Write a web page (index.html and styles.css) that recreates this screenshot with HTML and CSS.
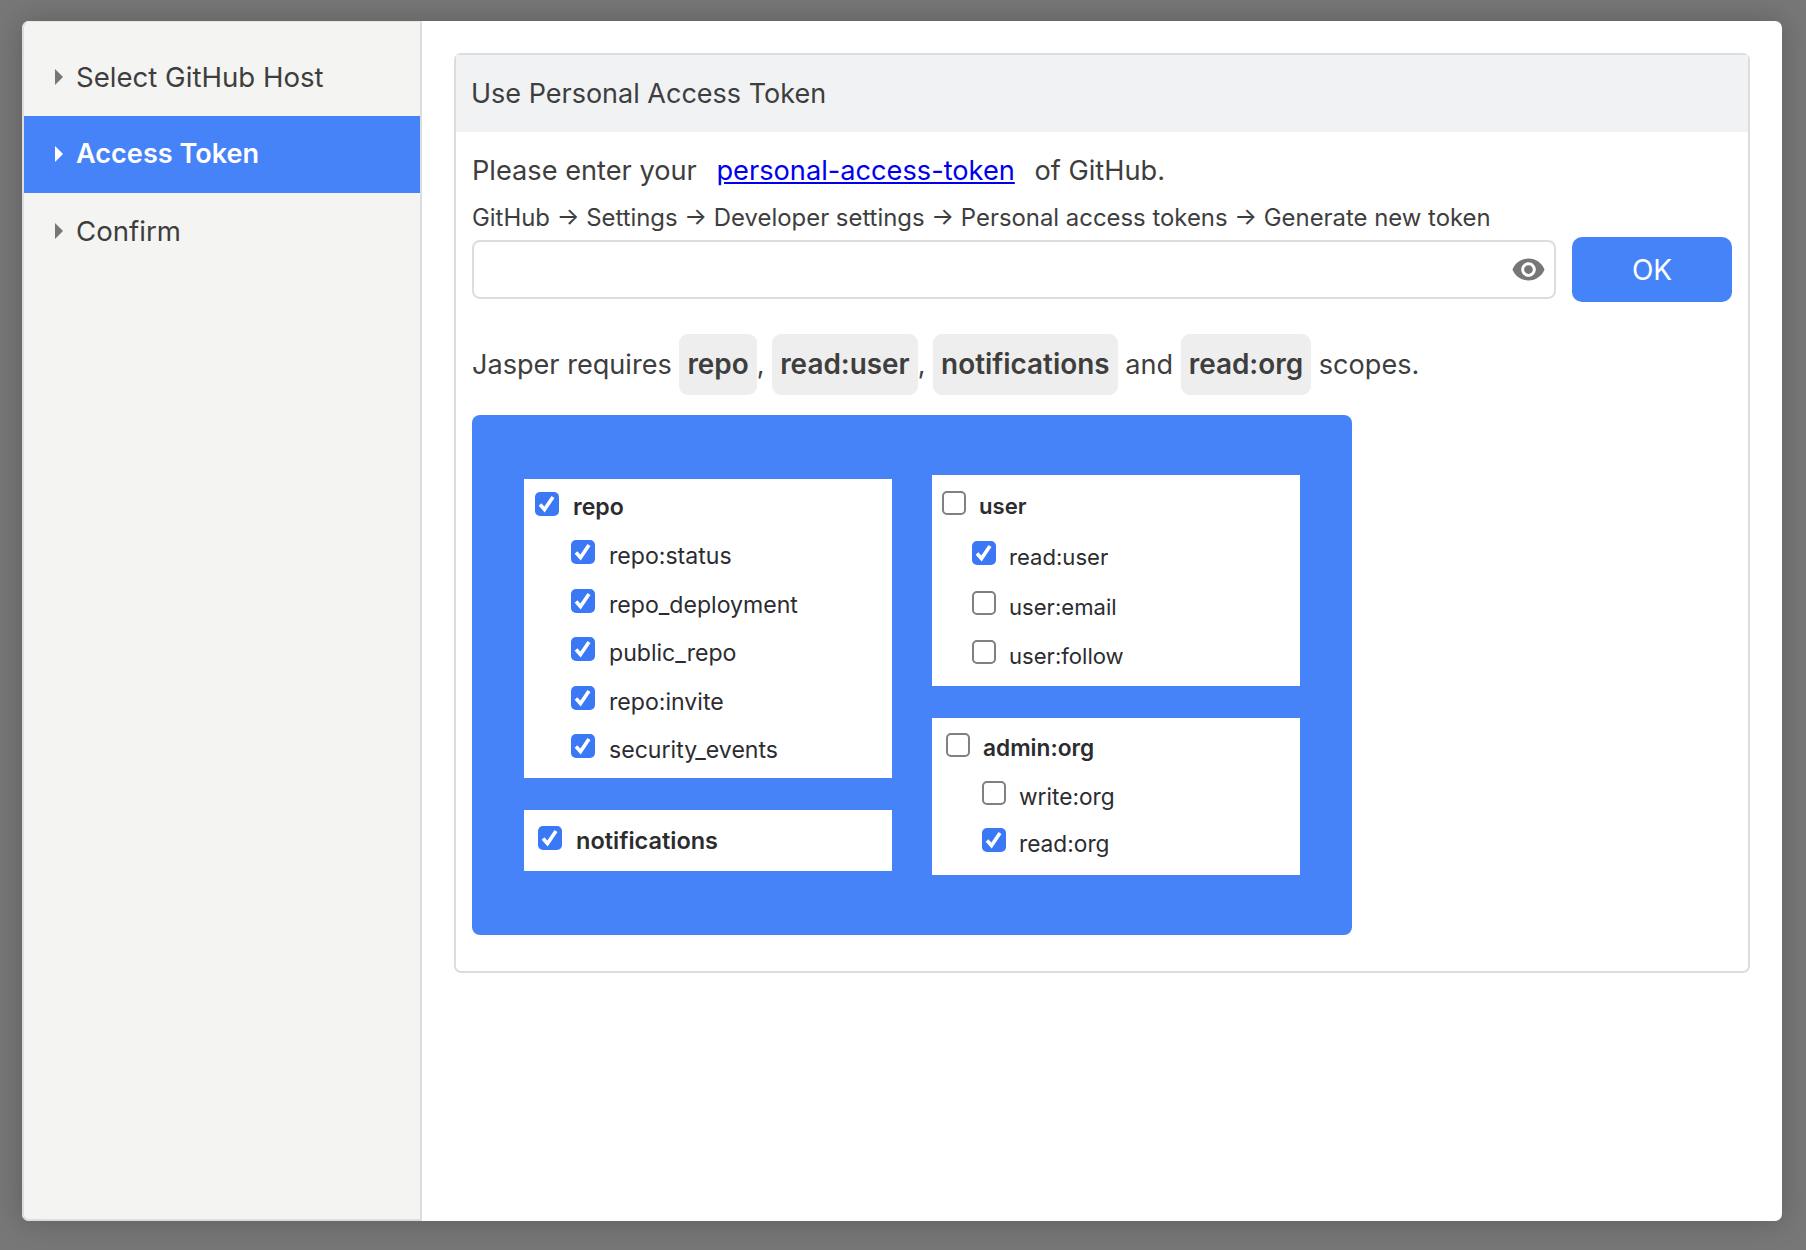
FILE: index.html
```html
<!DOCTYPE html>
<html lang="en">
<head>
    <meta charset="UTF-8">
    <title>Jasper</title>
    <link rel="stylesheet" href="styles.css">
</head>
<body>
    <div class="window">
        <div class="side">
            <div class="side-item"><span class="arrow"></span>Select GitHub Host</div>
            <div class="side-item active"><span class="arrow"></span>Access Token</div>
            <div class="side-item"><span class="arrow"></span>Confirm</div>
        </div>
        <div class="main">
            <div class="panel">
                <div class="panel-head">Use Personal Access Token</div>
                <div class="panel-body">
                    <div class="intro">Please enter your <a href="#">personal-access-token</a> of GitHub.</div>
                    <div class="path">GitHub → Settings → Developer settings → Personal access tokens → Generate new token</div>
                    <div class="token-row">
                        <div class="token-field">
                            <input type="password" class="token-input">
                            <svg class="eye" viewBox="0 0 24 24"><path d="M12 4.5C7 4.5 2.73 7.61 1 12c1.73 4.39 6 7.5 11 7.5s9.27-3.11 11-7.5c-1.73-4.39-6-7.5-11-7.5zM12 17c-2.76 0-5-2.24-5-5s2.24-5 5-5 5 2.24 5 5-2.24 5-5 5zm0-8c-1.66 0-3 1.34-3 3s1.34 3 3 3 3-1.34 3-3-1.34-3-3-3z"/></svg>
                        </div>
                        <button class="ok-btn">OK</button>
                    </div>
                    <div class="scopes">Jasper requires <span class="pill">repo</span>, <span class="pill">read:user</span>, <span class="pill">notifications</span> and <span class="pill">read:org</span> scopes.</div>
                    <div class="scope-shot">
                        <div class="scope-col left-col">
                            <div class="scope-box repo-box">
                                <label class="row top"><input type="checkbox" checked>repo</label>
                                <label class="row"><input type="checkbox" checked>repo:status</label>
                                <label class="row"><input type="checkbox" checked>repo_deployment</label>
                                <label class="row"><input type="checkbox" checked>public_repo</label>
                                <label class="row"><input type="checkbox" checked>repo:invite</label>
                                <label class="row"><input type="checkbox" checked>security_events</label>
                            </div>
                            <div class="scope-box notif-box">
                                <label class="row top"><input type="checkbox" checked>notifications</label>
                            </div>
                        </div>
                        <div class="scope-col">
                            <div class="scope-box user-box">
                                <label class="row top"><input type="checkbox">user</label>
                                <label class="row"><input type="checkbox" checked>read:user</label>
                                <label class="row"><input type="checkbox">user:email</label>
                                <label class="row"><input type="checkbox">user:follow</label>
                            </div>
                            <div class="scope-box org-box">
                                <label class="row top"><input type="checkbox">admin:org</label>
                                <label class="row"><input type="checkbox">write:org</label>
                                <label class="row"><input type="checkbox" checked>read:org</label>
                            </div>
                        </div>
                    </div>
                </div>
            </div>
        </div>
    </div>
</body>
</html>
```
FILE: styles.css
```css
* {
    box-sizing: border-box;
}

body {
    margin: 0;
    height: 1250px;
    padding: 21px 24px 29px 22px;
    overflow: hidden;
    background-color: #777;
    font-family: Inter, "Liberation Sans", sans-serif;
    color: #3e3e3e;
}

.window {
    display: flex;
    height: 1200px;
    background-color: #fff;
    border-radius: 7px;
    box-shadow: 0 0 30px rgba(0, 0, 0, 0.22);
}

/* sidebar */
.side {
    width: 400px;
    padding-top: 17px;
    background-color: #f4f4f2;
    border-top: 1px solid #e6e6e6;
    border-left: 2px solid #ddd;
    border-right: 2px solid #ddd;
    border-bottom: 2px solid #ddd;
    border-radius: 7px 0 0 7px;
    font-size: 27.6px;
}

.side-item {
    display: flex;
    align-items: center;
    height: 77px;
    padding: 0 0 2px 31px;
}

.side-item.active {
    background-color: #4682f8;
    color: #fff;
    font-size: 27.1px;
    font-weight: 600;
}

.arrow {
    width: 0;
    height: 0;
    margin-right: 13px;
    border-top: 8px solid transparent;
    border-bottom: 8px solid transparent;
    border-left: 8px solid #777;
}

.active .arrow {
    border-left-color: #fff;
}

/* main area */
.main {
    flex: 1;
    padding: 32px 28px 0 32px;
}

.panel {
    width: 1296px;
    height: 920px;
    border: 2px solid #ddd;
    border-radius: 7px;
}

.panel-head {
    display: flex;
    align-items: center;
    height: 77px;
    padding-left: 15px;
    background-color: #f1f2f4;
    font-size: 27px;
}

.panel-body {
    padding: 16px 16px 0;
}

.intro {
    height: 46px;
    line-height: 46px;
    font-size: 27.2px;
}

.intro a {
    margin: 0 12px;
    color: #0000ee;
}

.path {
    height: 39px;
    margin-top: 4px;
    line-height: 39px;
    font-size: 23.9px;
}

.token-row {
    display: flex;
    gap: 16px;
    align-items: center;
}

.token-field {
    position: relative;
    width: 1084px;
}

.token-input {
    display: block;
    width: 100%;
    height: 59px;
    border: 2px solid #ddd;
    border-radius: 8px;
    outline: none;
}

.eye {
    position: absolute;
    right: 10px;
    top: 12px;
    width: 35px;
    height: 35px;
    fill: #777;
}

.ok-btn {
    width: 160px;
    height: 65px;
    border: none;
    border-radius: 10px;
    background-color: #4584f8;
    color: #fff;
    font-family: inherit;
    font-size: 28px;
}

.scopes {
    margin-top: 32px;
    font-size: 27.1px;
    line-height: 61px;
}

.pill {
    display: inline-block;
    height: 61px;
    padding: 0 8px;
    border-radius: 9px;
    background-color: #eee;
    font-size: 27.9px;
    font-weight: 600;
}

/* screenshot of the scope list on github */
.scope-shot {
    display: flex;
    gap: 40px;
    width: 880px;
    height: 520px;
    margin-top: 20px;
    padding: 60px 52px 0;
    border-radius: 8px;
    background-color: #4682f8;
}

.scope-col {
    display: flex;
    flex-direction: column;
    gap: 32px;
    width: 368px;
}

.left-col {
    padding-top: 4px;
}

.scope-box {
    background-color: #fff;
    color: #2c2c30;
    font-size: 23.1px;
}

.row {
    display: flex;
    align-items: center;
    gap: 14px;
    padding-left: 47px;
}

.row.top {
    padding-left: 11px;
    font-weight: 600;
}

.row input {
    appearance: none;
    flex: none;
    width: 24px;
    height: 24px;
    margin: -8px 0 0;
    border: 2px solid #808080;
    border-radius: 5px;
    background-color: #fff;
}

.row.top input {
    margin-top: -6px;
}

.row input:checked {
    border: none;
    background-color: #3b78f6;
    background-image: url("data:image/svg+xml,%3Csvg xmlns='http://www.w3.org/2000/svg' viewBox='0 0 24 24'%3E%3Cpath d='M5 12.5l4.5 5 8.5-12.5' fill='none' stroke='%23fff' stroke-width='3.6'/%3E%3C/svg%3E");
}

.repo-box {
    height: 299px;
}

.repo-box .row {
    height: 48.5px;
}

.repo-box .row.top {
    height: 53px;
    padding-top: 2px;
}

.notif-box {
    height: 61px;
}

.notif-box .row.top {
    height: 61px;
    padding-left: 14px;
    font-size: 23.5px;
}

.user-box {
    height: 211px;
    font-size: 22.1px;
}

.user-box .row {
    height: 49.7px;
    gap: 13px;
    padding-left: 40px;
}

.user-box .row.top {
    height: 57px;
    padding: 5px 0 0 10px;
}

.org-box {
    height: 157px;
    font-size: 22.7px;
}

.org-box .row {
    height: 47px;
    gap: 13px;
    padding-left: 50px;
}

.org-box .row.top {
    height: 55px;
    padding: 4px 0 0 14px;
}
```
